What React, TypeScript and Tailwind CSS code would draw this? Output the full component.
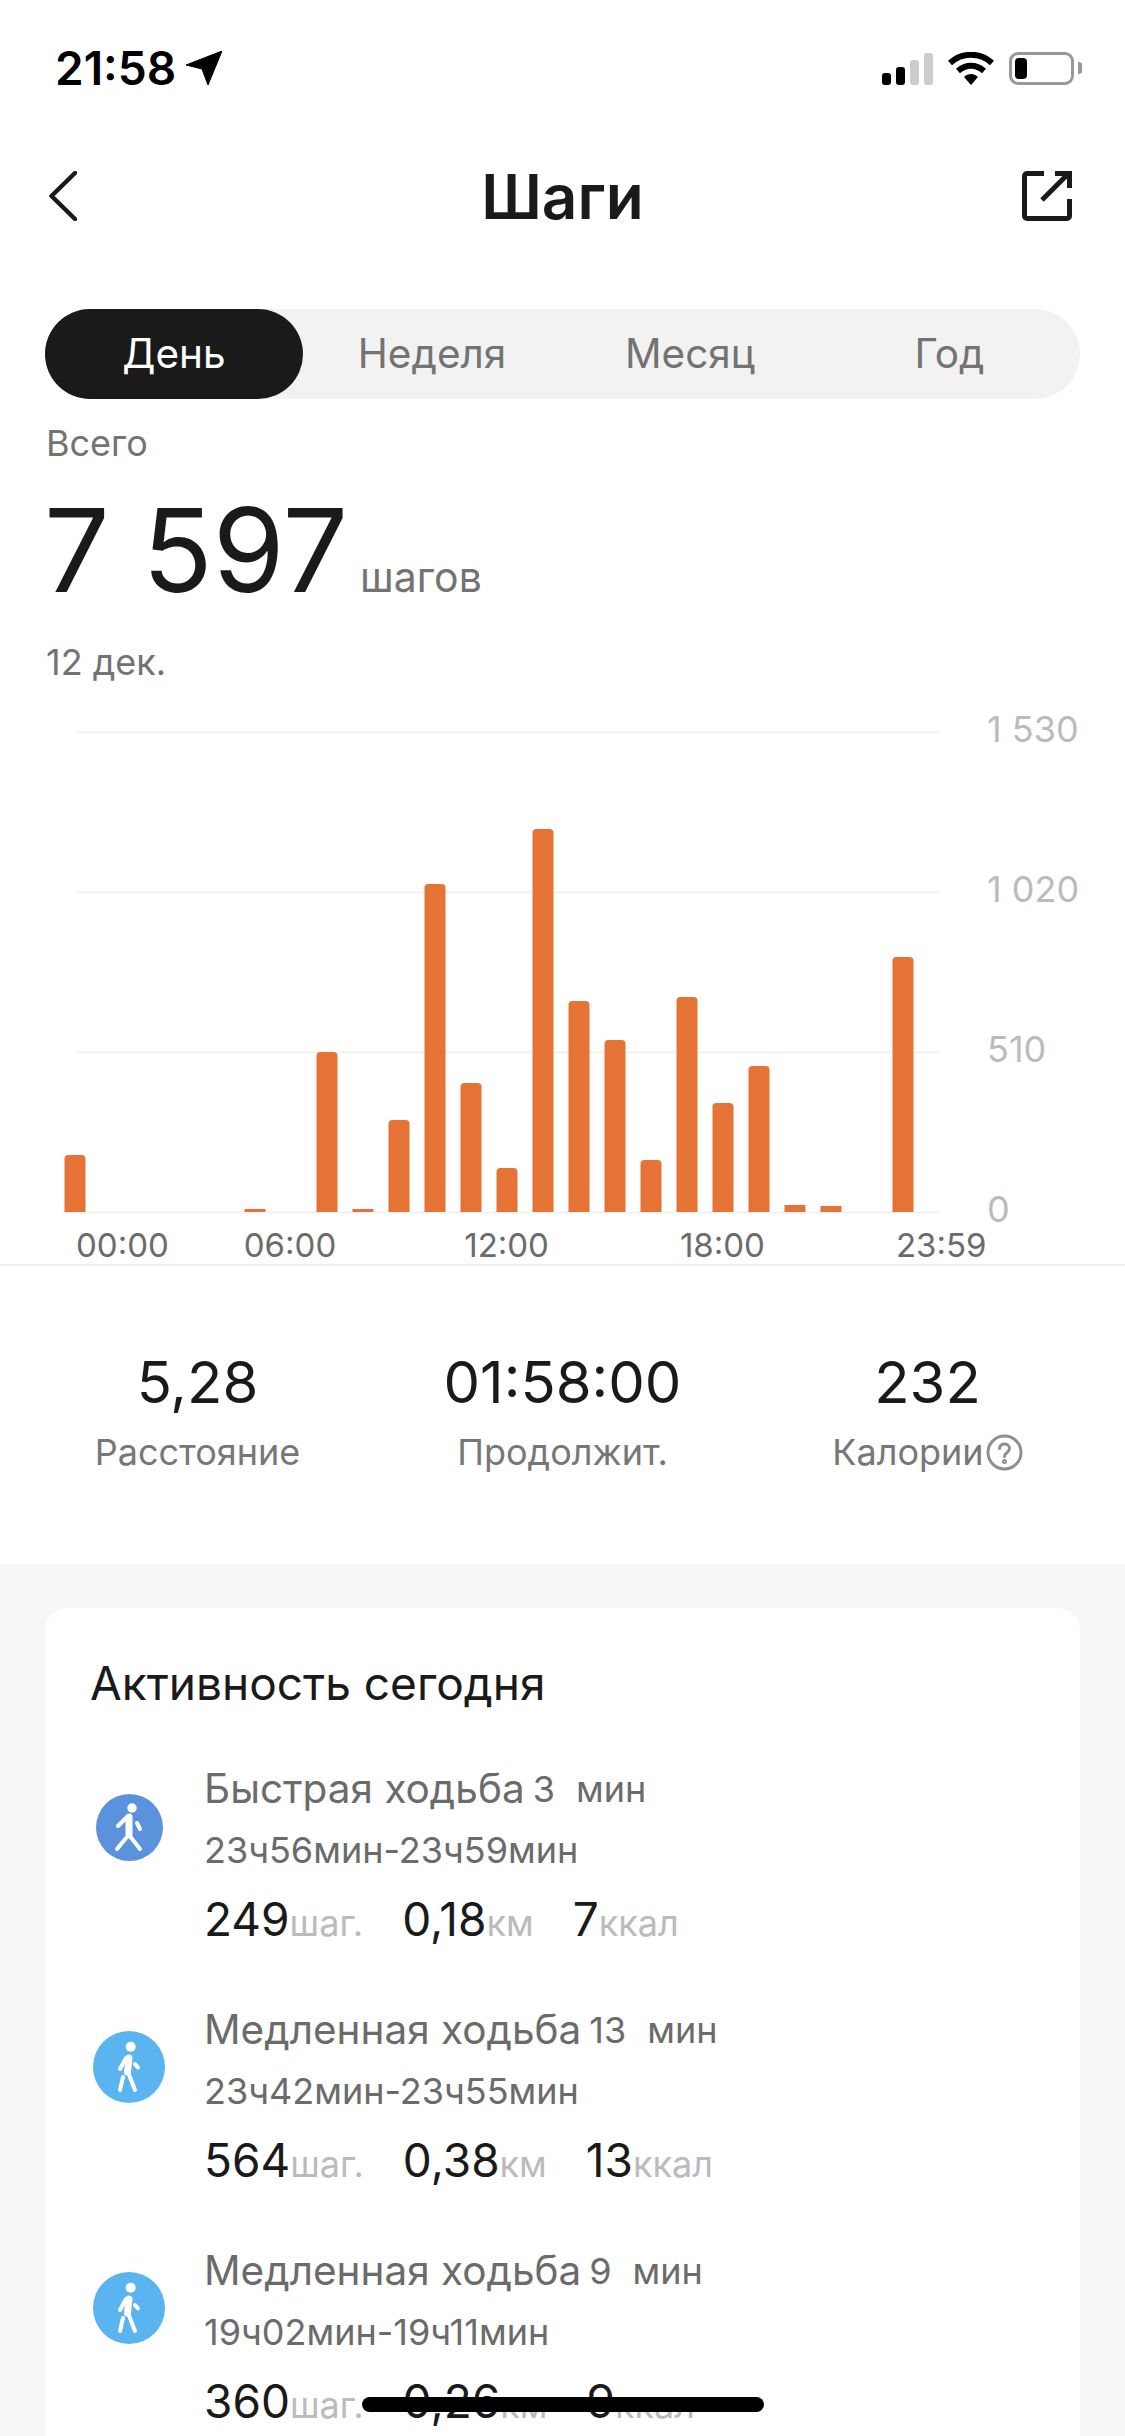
const BARS: [number, number][] = [
  [0, 57], [5, 3], [7, 160], [8, 3], [9, 92], [10, 328], [11, 129], [12, 44], [13, 383],
  [14, 211], [15, 172], [16, 52], [17, 215], [18, 109], [19, 146], [20, 7], [21, 6], [23, 255],
];

function Walker({ fast }: { fast?: boolean }) {
  if (fast) {
    return (
      <svg width="67" height="67" viewBox="0 0 67 67" fill="none" stroke="#fff" strokeLinecap="round" strokeLinejoin="round">
        <circle cx="33.5" cy="33.5" r="33.5" fill="#5a92db" stroke="none" />
        <circle cx="36" cy="14" r="4.7" fill="#fff" stroke="none" />
        <path d="M33 23 L33 41" strokeWidth="7" />
        <path d="M31 23 L22 32" strokeWidth="4" />
        <path d="M33 41 L44 55" strokeWidth="4" />
        <path d="M30 44 L21 55" strokeWidth="4" />
        <path d="M41 29 L44 35" strokeWidth="4" />
      </svg>
    );
  }
  return (
    <svg width="72" height="72" viewBox="0 0 72 72" fill="none" stroke="#fff" strokeLinecap="round" strokeLinejoin="round">
      <circle cx="36" cy="36" r="36" fill="#5ab4f0" stroke="none" />
      <circle cx="37.7" cy="15.7" r="5" fill="#fff" stroke="none" />
      <path d="M36 27 L34.5 41" strokeWidth="7" />
      <path d="M33 27 L27 38" strokeWidth="4" />
      <path d="M35 41 L42 59" strokeWidth="4" />
      <path d="M30 46 L27 59" strokeWidth="4" />
      <path d="M42 33 L45 36.5" strokeWidth="4" />
    </svg>
  );
}

function Stat({ value, unit }: { value: string; unit: string }) {
  return (
    <div className="flex items-baseline">
      <span className="text-[46px] text-[#1a1a1a]">{value}</span>
      <span className="text-[36px] text-[#bbbbbb]">{unit}</span>
    </div>
  );
}

type Activity = {
  name: string;
  mins: string;
  range: string;
  steps: string;
  km: string;
  kcal: string;
  fast?: boolean;
};

const ACTIVITIES: Activity[] = [
  { name: "Быстрая ходьба", mins: "3", range: "23ч56мин-23ч59мин", steps: "249", km: "0,18", kcal: "7", fast: true },
  { name: "Медленная ходьба", mins: "13", range: "23ч42мин-23ч55мин", steps: "564", km: "0,38", kcal: "13" },
  { name: "Медленная ходьба", mins: "9", range: "19ч02мин-19ч11мин", steps: "360", km: "0,26", kcal: "9" },
];

export default function App() {
  return (
    <div className="relative h-[2436px] w-[1125px] overflow-hidden bg-white font-[Inter,sans-serif]">
      {/* status bar */}
      <div className="flex h-[136px] items-center justify-between pl-[55px] pr-[43px]">
        <div className="flex items-center gap-[10px]">
          <span className="text-[46px] font-semibold leading-none text-black">21:58</span>
          <svg width="36" height="34" viewBox="0 0 36 34">
            <path d="M36 0 L22 34 L16 18 L0 14 Z" fill="#000" strokeLinejoin="round" stroke="#000" strokeWidth="1" />
          </svg>
        </div>
        <div className="flex items-end">
          <div className="flex items-end gap-[5px]">
            <div className="h-[12px] w-[9px] rounded-[3px] bg-black" />
            <div className="h-[18px] w-[9px] rounded-[3px] bg-black" />
            <div className="h-[25px] w-[9px] rounded-[3px] bg-[#cccccc]" />
            <div className="h-[32px] w-[9px] rounded-[3px] bg-[#cccccc]" />
          </div>
          <svg className="ml-[15px]" width="46" height="33" viewBox="0 0 46 33" fill="none" stroke="#000" strokeWidth="6">
            <path d="M2 11 C14 0 32 0 44 11" />
            <path d="M10 19 C18 12 28 12 36 19" />
            <path d="M16 25 L23 33 L30 25 C26 21 20 21 16 25 Z" fill="#000" stroke="none" />
          </svg>
          <div className="ml-[15px] flex items-center">
            <div className="flex h-[33px] w-[65px] items-center rounded-[9px] border-[3px] border-[#999999] pl-[3px]">
              <div className="h-[21px] w-[12px] rounded-[4px] bg-black" />
            </div>
            <div className="ml-[4px] h-[12px] w-[4px] rounded-r-[3px] bg-[#999999]" />
          </div>
        </div>
      </div>

      {/* nav */}
      <div className="flex h-[120px] items-center justify-between pl-[49px] pr-[53px]">
        <div className="w-[54px]">
          <svg width="28" height="50" viewBox="0 0 28 50" fill="none" stroke="#1a1a1a" strokeWidth="4.5" strokeLinecap="round" strokeLinejoin="round">
            <path d="M26 2 L2.5 25 L26 48" />
          </svg>
        </div>
        <h1 className="text-[62px] font-semibold text-[#1a1a1a]">Шаги</h1>
        <svg width="50" height="50" viewBox="0 0 50 50" fill="none" stroke="#1a1a1a" strokeWidth="5">
          <path d="M22 2.5 H5 A2.5 2.5 0 0 0 2.5 5 V45 A2.5 2.5 0 0 0 5 47.5 H45 A2.5 2.5 0 0 0 47.5 45 V28" />
          <path d="M20 29 L45 4" />
          <path d="M33 2.5 H47.5 V17" />
        </svg>
      </div>

      {/* tabs */}
      <div className="mx-[45px] mt-[53px] flex h-[90px] items-center rounded-[45px] bg-[#f2f2f2] text-[40.5px] text-[#737373]">
        <div className="flex h-full w-[258px] items-center justify-center rounded-[45px] bg-[#1a1a1a] text-white">День</div>
        <div className="flex h-full w-[258px] items-center justify-center">Неделя</div>
        <div className="flex h-full w-[258px] items-center justify-center">Месяц</div>
        <div className="flex h-full flex-1 items-center justify-center">Год</div>
      </div>

      {/* total */}
      <div className="mt-[24px] h-[40px] pl-[46px] text-[36px] leading-[40px] text-[#737373]">Всего</div>
      <div className="mt-[32px] flex h-[110px] items-baseline pl-[44px]">
        <span className="text-[116px] leading-[110px] text-[#1a1a1a]">7 597</span>
        <span className="ml-[12px] text-[41px] text-[#737373]">шагов</span>
      </div>
      <div className="mt-[37px] h-[40px] pl-[46px] text-[36px] leading-[40px] text-[#737373]">12 дек.</div>

      {/* chart */}
      <div className="mt-[49px] flex h-[484px]">
        <svg className="shrink-0" width="940" height="484" viewBox="0 0 940 484">
          <path d="M76 1.5 H940 M76 161.5 H940 M76 321.5 H940 M64 481.5 H940" stroke="#f2f2f2" strokeWidth="2" />
          {BARS.map(([i, h]) => (
            <path
              key={i}
              fill="#e57335"
              d={h > 8
                ? `M${64.5 + i * 36} 481 V${481 - h + 4} q0 -4 4 -4 h13 q4 0 4 4 V481 Z`
                : `M${64.5 + i * 36} 481 V${481 - h} h21 V481 Z`}
            />
          ))}
        </svg>
        <div className="ml-[47px] flex h-[524px] -translate-y-[24px] flex-col justify-between text-[36px] leading-[44px] text-[#bbbbbb]">
          <span>1 530</span>
          <span>1 020</span>
          <span>510</span>
          <span>0</span>
        </div>
      </div>
      <div className="flex h-[49px] items-center pt-[13px] text-[33px] text-[#6b6b6b]">
        <span className="ml-[76px]">00:00</span>
        <span className="ml-[75px]">06:00</span>
        <span className="ml-[128px]">12:00</span>
        <span className="ml-[131px]">18:00</span>
        <span className="ml-[131px]">23:59</span>
      </div>
      <div className="h-[2px] bg-[#eeeeee]" />

      {/* summary */}
      <div className="grid h-[298px] grid-cols-3 px-[15px] pt-[81px] text-center">
        <div>
          <div className="text-[58px] leading-[70px] text-[#1a1a1a]">5,28</div>
          <div className="text-[36px] leading-[70px] text-[#777777]">Расстояние</div>
        </div>
        <div>
          <div className="text-[58px] leading-[70px] text-[#1a1a1a]">01:58:00</div>
          <div className="text-[36px] leading-[70px] text-[#777777]">Продолжит.</div>
        </div>
        <div>
          <div className="text-[58px] leading-[70px] text-[#1a1a1a]">232</div>
          <div className="flex items-center justify-center text-[36px] leading-[70px] text-[#777777]">
            Калории
            <svg className="ml-[2px]" width="37" height="37" viewBox="0 0 37 37" fill="none" stroke="#8f8f8f" strokeWidth="3" strokeLinecap="round">
              <circle cx="18.5" cy="18.5" r="16.5" />
              <path d="M13.5 14.5 C13.5 8.5 23.5 8.5 23.5 14.5 C23.5 18.5 18.5 18.5 18.5 22.5" />
              <circle cx="18.5" cy="27.5" r="1" />
            </svg>
          </div>
        </div>
      </div>

      {/* activities */}
      <div className="h-[880px] bg-[#f7f7f7] px-[45px] pt-[44px]">
        <div className="h-[900px] rounded-[22px] bg-white pl-[48px] pt-[50px]">
          <div className="-ml-[3px] text-[46px] leading-[50px] text-[#1a1a1a]">Активность сегодня</div>
          <div className="mt-[56px] flex flex-col gap-[61px]">
            {ACTIVITIES.map((a) => (
              <div key={a.range} className="flex">
                <div className={`flex w-[72px] justify-center ${a.fast ? "mt-[30px]" : "mt-[26px]"}`}>
                  <div className="h-fit">
                    <Walker fast={a.fast} />
                  </div>
                </div>
                <div className="ml-[39px]">
                  <div className="flex h-[50px] items-center text-[40.5px] text-[#6b6b6b]">
                    {a.name}
                    <span className="ml-[8px] text-[36px]">{a.mins}</span>
                    <span className="ml-[21px] text-[36px]">мин</span>
                  </div>
                  <div className="mt-[11px] flex h-[50px] items-center text-[36px] text-[#6b6b6b]">{a.range}</div>
                  <div className="mt-[19px] flex h-[50px] items-center gap-[39px]">
                    <Stat value={a.steps} unit="шаг." />
                    <Stat value={a.km} unit="км" />
                    <Stat value={a.kcal} unit="ккал" />
                  </div>
                </div>
              </div>
            ))}
          </div>
        </div>
      </div>

      {/* home indicator */}
      <div className="absolute bottom-[24px] left-[362px] h-[15px] w-[402px] rounded-full bg-black" />
    </div>
  );
}
